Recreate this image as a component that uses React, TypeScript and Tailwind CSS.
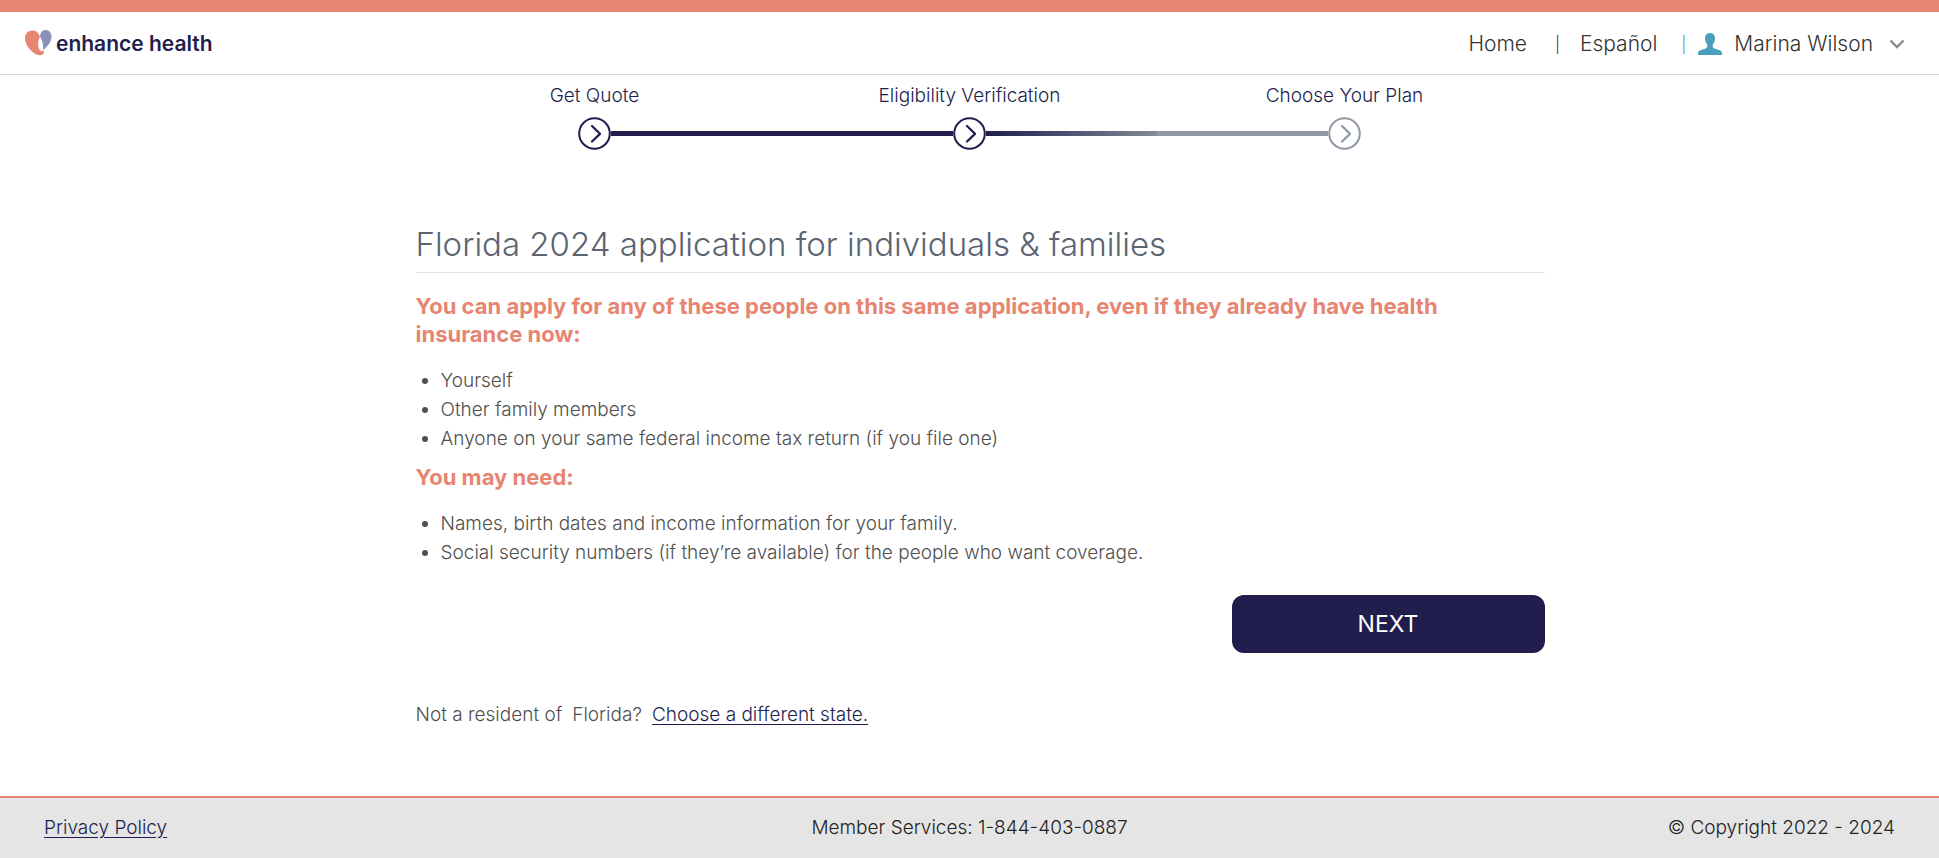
import React from "react";

function Logo() {
  return (
    <a href="#home" className="flex items-center gap-1 text-[#211e4e]">
      <svg width="27" height="26" viewBox="0 0 27 26" aria-hidden="true">
        <path
          d="M7.5 0.5C3 0.5 0 3.5 0 8c0 7.500 7.500 16.800 15.200 17.200 2.600.1 4.300-1.900 3.900-5.200-1.100 1.700-3.100 1.500-4.300-.1-2.400-3.200-2-7.900.1-13.100C13.400 2.500 11.300.5 7.500.5Z"
          fill="#e68672"
        />
        <path
          d="M20.200 0c-2.700 0-4.500 2.200-5.400 6 2.100 3.600 3.700 7.700 3.500 14C22.600 16.600 26.500 11.700 26.500 6.500 26.500 2.600 24 0 20.200 0Z"
          fill="#8b91b9"
        />
      </svg>
      <span className="pt-0.5 text-[21px] leading-6 font-semibold">enhance health</span>
    </a>
  );
}

function UserIcon() {
  return (
    <svg width="24" height="22" viewBox="0 0 24 22" aria-hidden="true">
      <path
        d="M12 0C8.800 0 7 2 7 5c0 2.600.7 4.700 2.200 6.200v2.600c0 .8-.5 1.300-1.400 1.600L3 16.900C1 17.600 0 18.600 0 20.300V22h24v-1.700c0-1.700-1-2.700-3-3.400l-4.800-1.500c-.9-.3-1.400-.8-1.400-1.600v-2.600C16.300 9.700 17 7.600 17 5c0-3-1.800-5-5-5Z"
        fill="#4b9fba"
      />
    </svg>
  );
}

function Header() {
  return (
    <header className="flex h-[75px] items-center justify-between border-t-12 border-b border-t-[#e68672] border-b-[#d6d6d6] pr-[34px] pl-[25px]">
      <Logo />
      <nav className="flex items-center pt-0.5 text-[21px] leading-6 font-light text-[#333]">
        <a href="#home">Home</a>
        <span className="mr-[20px] ml-[28px] text-[16px] leading-6">|</span>
        <a href="#espanol">Español</a>
        <span className="mr-[12px] ml-[24px] text-[16px] leading-6 text-[#4b8fc4]">|</span>
        <button type="button" className="flex items-center gap-3">
          <UserIcon />
          <span>Marina Wilson</span>
          <svg width="16" height="10" viewBox="0 0 16 10" className="ml-1" fill="none" stroke="#8a8a8a" strokeWidth="2.400" aria-hidden="true">
            <path d="M1.500 1.500 8 8l6.500-6.500" />
          </svg>
        </button>
      </nav>
    </header>
  );
}

function StepMark({ color }: { color: string }) {
  return (
    <svg width="33" height="33" viewBox="0 0 33 33" className="shrink-0" fill="none" stroke={color} aria-hidden="true">
      <circle cx="16.500" cy="16.500" r="15.300" strokeWidth="2" />
      <path d="m14 9 8 7.800-8 7.700" strokeWidth="2.300" strokeLinecap="round" strokeLinejoin="round" />
    </svg>
  );
}

const steps = [
  { label: "Get Quote", color: "#211e4e", left: "bg-transparent", right: "bg-[#211e4e]" },
  {
    label: "Eligibility Verification",
    color: "#211e4e",
    left: "bg-[#211e4e]",
    right: "bg-linear-to-r from-[#211e4e] to-[#828c93]",
  },
  { label: "Choose Your Plan", color: "#8f98a5", left: "bg-[#8f98a5]", right: "bg-transparent" },
];

function Stepper() {
  return (
    <ol className="mx-auto mt-2 grid w-full max-w-[1125px] grid-cols-3" aria-label="Progress">
      {steps.map((s) => (
        <li key={s.label} className="flex flex-col items-center gap-[8px]">
          <span className="text-[19px] leading-[26px] font-light text-[#211e4e]">{s.label}</span>
          <span className="flex w-full items-center">
            <span className={`h-[5px] flex-1 ${s.left}`} />
            <StepMark color={s.color} />
            <span className={`h-[5px] flex-1 ${s.right}`} />
          </span>
        </li>
      ))}
    </ol>
  );
}

const subheading = "text-[22px] leading-7 font-bold text-[#e68672]";
const list = "list-disc pl-[25px] text-[19px] leading-[29px] text-[#4f4f4f] font-light";

export default function App() {
  return (
    <div className="flex min-h-screen flex-col bg-white font-['Inter','Noto_Sans',sans-serif]">
      <Header />
      <Stepper />
      <main className="mx-auto w-full max-w-[1170px] pt-[74px] pr-[10px] pl-[31px]">
        <h1 className="border-b border-[#d9e4e4] pb-2 text-[33px] leading-[40px] font-light text-[#5a6472]">
          Florida 2024 application for individuals &amp; families
        </h1>
        <h2 className={`mt-[19px] ${subheading}`}>
          You can apply for any of these people on this same application, even if they already have health insurance now:
        </h2>
        <ul className={`mt-[18px] ${list}`}>
          <li>Yourself</li>
          <li>Other family members</li>
          <li>Anyone on your same federal income tax return (if you file one)</li>
        </ul>
        <h2 className={`mt-[10px] ${subheading}`}>You may need:</h2>
        <ul className={`mt-[18px] ${list}`}>
          <li>Names, birth dates and income information for your family.</li>
          <li>Social security numbers (if they’re available) for the people who want coverage.</li>
        </ul>
        <div className="mt-[28px] flex justify-end">
          <button type="button" className="h-[58px] w-[313px] rounded-xl bg-[#211e4e] text-[23px] text-white">
            NEXT
          </button>
        </div>
        <p className="mt-[48px] mb-8 flex gap-[10px] text-[19px] leading-7 font-light text-[#4f4f4f]">
          <span>Not a resident of</span>
          <span>Florida?</span>
          <a href="#states" className="text-[#211e4e] underline underline-offset-3">
            Choose a different state.
          </a>
        </p>
      </main>
      <footer className="mt-auto grid h-[62px] grid-cols-3 items-center border-t-2 border-[#e68672] bg-[#e5e5e5] px-[44px] text-[19px] leading-7 font-light text-[#222]">
        <a href="#privacy" className="justify-self-start text-[#211e4e] underline underline-offset-3">
          Privacy Policy
        </a>
        <span className="justify-self-center">Member Services: 1-844-403-0887</span>
        <span className="justify-self-end">© Copyright 2022 - 2024</span>
      </footer>
    </div>
  );
}
